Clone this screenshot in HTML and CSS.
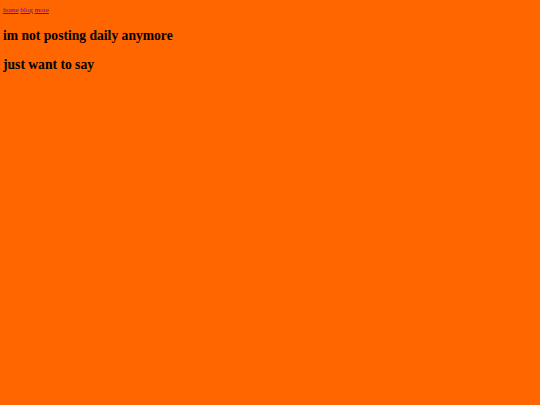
FILE: index.html
```html
<!DOCTYPE html>
<html>
<head>
<meta charset="utf-8">
<link rel="stylesheet" href="styles.css">
</head>
<body>
<nav class="nav"><a href="#home">home</a> <a href="#blog">blog</a> <a href="#more">more</a></nav>
<h2 class="title title-first">im not posting daily anymore</h2>
<h2 class="title">just want to say</h2>
</body>
</html>
```
FILE: styles.css
```css
html { background: #ff6600; }
body {
  margin: 3px;
  font-family: "Liberation Serif", serif;
  color: #000;
}
.nav {
  font-size: 7px;
  padding-top: 3px;
}
.nav a { color: #3c1aa8; }
.title {
  font-size: 13.6px;
  font-weight: bold;
  margin: 13px 0;
}
.title-first { margin-top: 14px; }
```
